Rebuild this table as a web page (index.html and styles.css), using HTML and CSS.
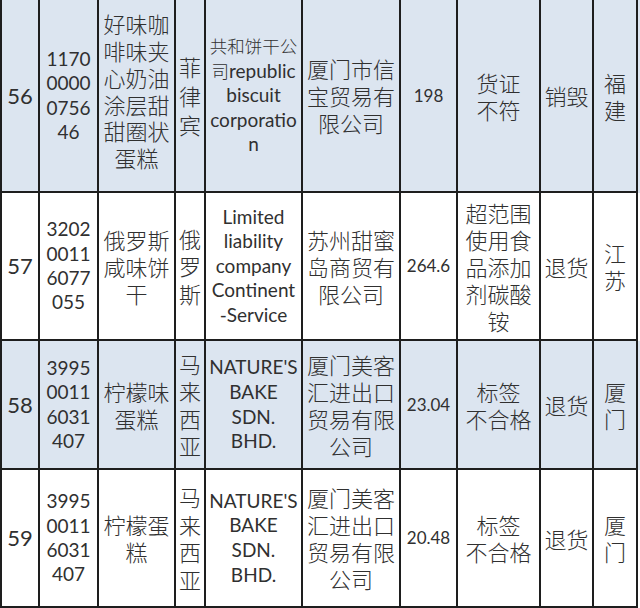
FILE: index.html
```html
<!DOCTYPE html>
<html lang="zh-CN">
<head>
<meta charset="utf-8">
<title>进口食品不合格信息</title>
<link rel="stylesheet" href="styles.css">
</head>
<body>
<div class="sheet">
  <div class="row blue r56">
    <div class="cell no">56</div>
    <div class="cell code">1170<br>0000<br>0756<br>46</div>
    <div class="cell cn tall">好味咖<br>啡味夹<br>心奶油<br>涂层甜<br>甜圈状<br>蛋糕</div>
    <div class="cell cn country wide">菲<br>律<br>宾</div>
    <div class="cell en"><div class="stack"><span class="han">共和饼干公</span><br><span class="han">司</span>republic<br>biscuit<br>corporatio<br>n</div></div>
    <div class="cell cn">厦门市信<br>宝贸易有<br>限公司</div>
    <div class="cell price">198</div>
    <div class="cell cn">货证<br>不符</div>
    <div class="cell cn">销毁</div>
    <div class="cell cn">福<br>建</div>
  </div>
  <div class="row r57">
    <div class="cell no">57</div>
    <div class="cell code">3202<br>0011<br>6077<br>055</div>
    <div class="cell cn">俄罗斯<br>咸味饼<br>干</div>
    <div class="cell cn country">俄<br>罗<br>斯</div>
    <div class="cell en">Limited<br>liability<br>company<br>Continent<br>-Service</div>
    <div class="cell cn">苏州甜蜜<br>岛商贸有<br>限公司</div>
    <div class="cell price">264.6</div>
    <div class="cell cn">超范围<br>使用食<br>品添加<br>剂碳酸<br>铵</div>
    <div class="cell cn">退货</div>
    <div class="cell cn">江<br>苏</div>
  </div>
  <div class="row blue r58">
    <div class="cell no">58</div>
    <div class="cell code">3995<br>0011<br>6031<br>407</div>
    <div class="cell cn">柠檬味<br>蛋糕</div>
    <div class="cell cn country">马<br>来<br>西<br>亚</div>
    <div class="cell en">NATURE'S<br>BAKE<br>SDN.<br>BHD.</div>
    <div class="cell cn">厦门美客<br>汇进出口<br>贸易有限<br>公司</div>
    <div class="cell price">23.04</div>
    <div class="cell cn">标签<br>不合格</div>
    <div class="cell cn">退货</div>
    <div class="cell cn">厦<br>门</div>
  </div>
  <div class="row r59">
    <div class="cell no">59</div>
    <div class="cell code">3995<br>0011<br>6031<br>407</div>
    <div class="cell cn">柠檬蛋<br>糕</div>
    <div class="cell cn country">马<br>来<br>西<br>亚</div>
    <div class="cell en">NATURE'S<br>BAKE<br>SDN.<br>BHD.</div>
    <div class="cell cn">厦门美客<br>汇进出口<br>贸易有限<br>公司</div>
    <div class="cell price">20.48</div>
    <div class="cell cn">标签<br>不合格</div>
    <div class="cell cn">退货</div>
    <div class="cell cn">厦<br>门</div>
  </div>
</div>
</body>
</html>
```
FILE: styles.css
```css
html, body {
  margin: 0;
  padding: 0;
  background: #ffffff;
}

body {
  font-family: "Noto Sans CJK SC", "Noto Sans", sans-serif;
  font-weight: 300;
  color: #303030;
  width: 640px;
  height: 608px;
  overflow: hidden;
}

.sheet {
  width: 640px;
  border-left: 2px solid #1e1e1e;
  box-sizing: border-box;
}

.row {
  display: grid;
  grid-template-columns: 38px 59px 77px 30px 97px 98px 57px 83px 53px 44px;
  background: #ffffff;
}

.row.blue {
  background: #dce5f0;
}

.r56 { height: 193px; }
.r57 { height: 148px; }
.r58 { height: 129px; }
.r59 { height: 138px; }

.cell {
  box-sizing: border-box;
  border-right: 2px solid #1e1e1e;
  border-bottom: 2px solid #1e1e1e;
  display: flex;
  align-items: center;
  justify-content: center;
  text-align: center;
  white-space: nowrap;
  overflow: hidden;
}

.stack {
  text-align: center;
}

.no {
  font-family: "Lato", "Noto Sans CJK SC", sans-serif;
  font-weight: 400;
  font-size: 22px;
  line-height: 28px;
}

.code {
  font-family: "Lato", "Noto Sans CJK SC", sans-serif;
  font-weight: 400;
  font-size: 19px;
  line-height: 24.4px;
}

.cn {
  font-size: 22px;
  line-height: 27px;
}

.cn.tall {
  line-height: 26.7px;
  padding-bottom: 10px;
}

.country {
  line-height: 27.5px;
}

.country.wide {
  line-height: 29px;
}

.en {
  font-family: "Lato", "Noto Sans CJK SC", sans-serif;
  font-weight: 400;
  font-size: 19px;
  line-height: 24.6px;
}

.en .han {
  font-family: "Noto Sans CJK SC", sans-serif;
  font-weight: 300;
  font-size: 17.5px;
}

.price {
  font-family: "Lato", "Noto Sans CJK SC", sans-serif;
  font-weight: 400;
  font-size: 17px;
  line-height: 22px;
}
```
